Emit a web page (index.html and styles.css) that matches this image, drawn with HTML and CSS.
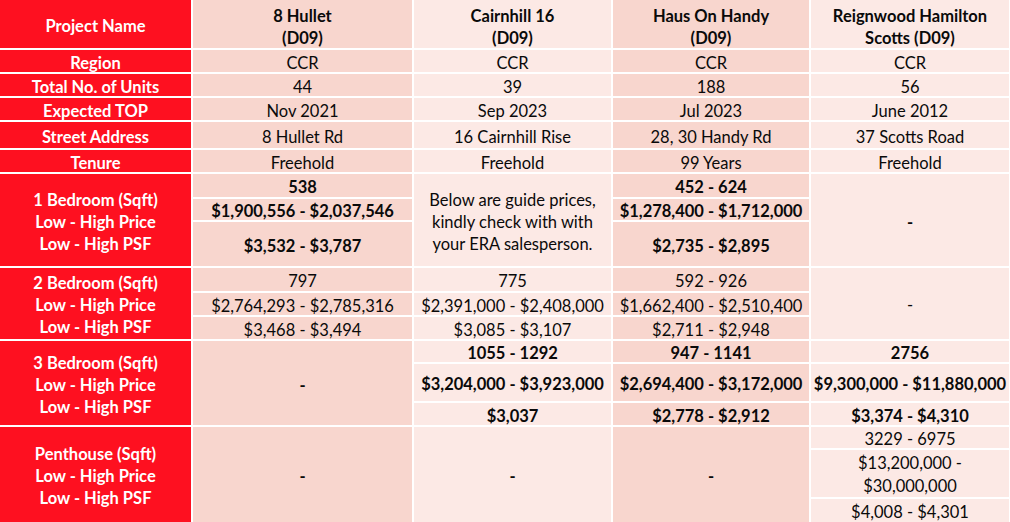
FILE: index.html
```html
<!DOCTYPE html>
<html>
<head>
<meta charset="utf-8">
<link rel="stylesheet" href="styles.css">
</head>
<body>
<div class="table">
  <div class="lab">Project Name</div>
  <div class="d b hd">8 Hullet<br>(D09)</div>
  <div class="l b hd">Cairnhill 16<br>(D09)</div>
  <div class="d b hd">Haus On Handy<br>(D09)</div>
  <div class="l b hd">Reignwood Hamilton<br>Scotts (D09)</div>

  <div class="lab">Region</div>
  <div class="d">CCR</div><div class="l">CCR</div><div class="d">CCR</div><div class="l">CCR</div>

  <div class="lab">Total No. of Units</div>
  <div class="d">44</div><div class="l">39</div><div class="d">188</div><div class="l">56</div>

  <div class="lab">Expected TOP</div>
  <div class="d">Nov 2021</div><div class="l">Sep 2023</div><div class="d">Jul 2023</div><div class="l">June 2012</div>

  <div class="lab">Street Address</div>
  <div class="d">8 Hullet Rd</div><div class="l">16 Cairnhill Rise</div><div class="d">28, 30 Handy Rd</div><div class="l">37 Scotts Road</div>

  <div class="lab">Tenure</div>
  <div class="d">Freehold</div><div class="l">Freehold</div><div class="d">99 Years</div><div class="l">Freehold</div>

  <div class="lab s3">1 Bedroom (Sqft)<br>Low - High Price<br>Low - High PSF</div>
  <div class="d b">538</div>
  <div class="l s3 note">Below are guide prices,<br>kindly check with with<br>your ERA salesperson.</div>
  <div class="d b">452 - 624</div>
  <div class="l s3 b">-</div>
  <div class="d b">$1,900,556 - $2,037,546</div>
  <div class="d b">$1,278,400 - $1,712,000</div>
  <div class="d b">$3,532 - $3,787</div>
  <div class="d b">$2,735 - $2,895</div>

  <div class="lab s3">2 Bedroom (Sqft)<br>Low - High Price<br>Low - High PSF</div>
  <div class="d">797</div><div class="l">775</div><div class="d">592 - 926</div>
  <div class="l s3">-</div>
  <div class="d">$2,764,293 - $2,785,316</div><div class="l">$2,391,000 - $2,408,000</div><div class="d">$1,662,400 - $2,510,400</div>
  <div class="d">$3,468 - $3,494</div><div class="l">$3,085 - $3,107</div><div class="d">$2,711 - $2,948</div>

  <div class="lab s3">3 Bedroom (Sqft)<br>Low - High Price<br>Low - High PSF</div>
  <div class="d s3 b">-</div>
  <div class="l b">1055 - 1292</div><div class="d b">947 - 1141</div><div class="l b">2756</div>
  <div class="l b">$3,204,000 - $3,923,000</div><div class="d b">$2,694,400 - $3,172,000</div><div class="l b">$9,300,000 - $11,880,000</div>
  <div class="l b">$3,037</div><div class="d b">$2,778 - $2,912</div><div class="l b">$3,374 - $4,310</div>

  <div class="lab s3">Penthouse (Sqft)<br>Low - High Price<br>Low - High PSF</div>
  <div class="d s3 b">-</div>
  <div class="l s3 b">-</div>
  <div class="d s3 b">-</div>
  <div class="l">3229 - 6975</div>
  <div class="l wrap">$13,200,000 -<br>$30,000,000</div>
  <div class="l">$4,008 - $4,301</div>
</div>
</body>
</html>
```

FILE: styles.css
```css
html, body {
  margin: 0;
  padding: 0;
  background: #ffffff;
}

.table {
  display: grid;
  grid-template-columns: 191px 219px 197px 196px 198px;
  grid-template-rows: 48px 22px 22px 22px 26px 22px 23px 21px 44px 23px 22px 22px 21px 37px 22px 21px 47px 23px;
  gap: 2px;
  width: 1009px;
  background: #ffffff;
  font-family: Lato, "Open Sans", sans-serif;
  font-size: 16.5px;
  line-height: 22px;
  color: #0a0a0a;
}

.table > div {
  display: flex;
  align-items: center;
  justify-content: center;
  text-align: center;
  white-space: nowrap;
  overflow: visible;
  padding-top: 3px;
}

.lab {
  background: #fe1020;
  color: #ffffff;
  font-weight: 700;
}

.d {
  background: #f8d6ce;
}

.l {
  background: #fce9e5;
}

.b {
  font-weight: 700;
}

.table > .hd {
  padding-top: 5px;
}

.s3 {
  grid-row: span 3;
}

.note {
  line-height: 22px;
}

.wrap {
  line-height: 23px;
}
```
